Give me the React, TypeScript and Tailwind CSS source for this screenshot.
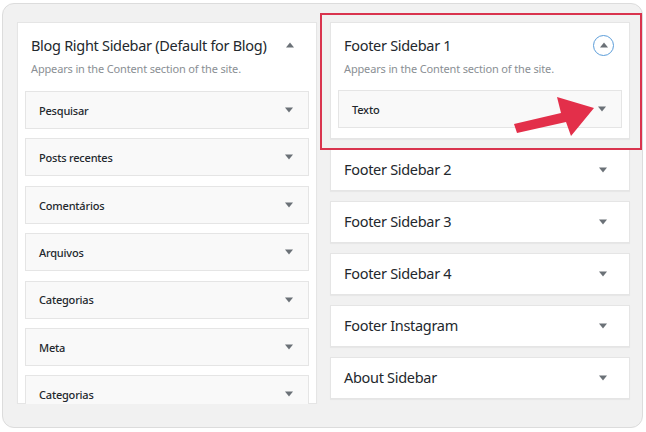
import React from "react";

const leftWidgets = ["Pesquisar", "Posts recentes", "Comentários", "Arquivos", "Categorias", "Meta", "Categorias"];
const rightAreas = ["Footer Sidebar 2", "Footer Sidebar 3", "Footer Sidebar 4", "Footer Instagram", "About Sidebar"];

function Caret({ up = false }: { up?: boolean }) {
  return (
    <svg width="8" height="6" viewBox="0 0 8 6" className="shrink-0">
      {up ? <polygon points="0,5.5 8,5.5 4,0.5" fill="#6b7177" /> : <polygon points="0,0.5 8,0.5 4,5.5" fill="#6b7177" />}
    </svg>
  );
}

function WidgetRow({ label }: { label: string }) {
  return (
    <div className="flex h-[38px] shrink-0 items-center justify-between border border-[#e5e5e5] bg-[#f9f9f9] pl-[13px] pr-[15px]">
      <span className="pt-[2px] text-[11px] font-medium tracking-[-0.2px] text-[#23282d]">{label}</span>
      <Caret />
    </div>
  );
}

export default function App() {
  return (
    <div className="h-[432px] w-[646px] bg-white pl-[2px] pr-[3px] pt-[3px]" style={{ fontFamily: '"Noto Sans", "Open Sans", sans-serif' }}>
      <div className="relative h-[425px] rounded-[12px] border border-[#dcdcdc] bg-[#f1f1f1]">
        <div className="flex h-[400px] gap-[13px] overflow-hidden pl-[14px] pt-[18px]">
          {/* left sidebar, open */}
          <div className="w-[300px] shrink-0 border border-[#e5e5e5] bg-white shadow-[0_1px_1px_rgba(0,0,0,0.04)]">
            <div className="flex items-center justify-between pl-[13px] pr-[22px] pt-[12px]">
              <h3 className="whitespace-nowrap text-[14.5px] leading-[20px] tracking-[-0.3px] text-[#23282d]">Blog Right Sidebar (Default for Blog)</h3>
              <Caret up />
            </div>
            <p className="pl-[13px] pt-[6px] text-[11px] leading-[16px] tracking-[-0.15px] text-[#8a8f94]">Appears in the Content section of the site.</p>
            <div className="flex flex-col gap-[9.4px] px-[7px] pt-[14px]">
              {leftWidgets.map((w, i) => (
                <WidgetRow key={i} label={w} />
              ))}
            </div>
          </div>

          {/* right column */}
          <div className="flex w-[300px] shrink-0 flex-col gap-[10px]">
            <div className="border border-[#e5e5e5] bg-white pb-[10px] shadow-[0_1px_1px_rgba(0,0,0,0.04)]">
              <div className="flex items-center justify-between pl-[13px] pr-[15px] pt-[12px]">
                <h3 className="whitespace-nowrap text-[14.5px] leading-[20px] tracking-[-0.3px] text-[#23282d]">Footer Sidebar 1</h3>
                <div className="-my-[1px] flex h-[21px] w-[21px] items-center justify-center rounded-full border border-[#5b9dd9]">
                  <Caret up />
                </div>
              </div>
              <p className="pl-[13px] pt-[6px] text-[11px] leading-[16px] tracking-[-0.15px] text-[#8a8f94]">Appears in the Content section of the site.</p>
              <div className="px-[7px] pt-[13px]">
                <WidgetRow label="Texto" />
              </div>
            </div>
            {rightAreas.map((a) => (
              <div key={a} className="flex h-[42px] shrink-0 items-center justify-between border border-[#e5e5e5] bg-white pl-[13px] pr-[22px] shadow-[0_1px_1px_rgba(0,0,0,0.04)]">
                <span className="whitespace-nowrap text-[14.5px] tracking-[-0.3px] text-[#23282d]">{a}</span>
                <Caret />
              </div>
            ))}
          </div>
        </div>

        {/* highlight box */}
        <div className="absolute left-[317px] top-[9px] h-[137px] w-[322px] border-2 border-[#d9344e]" />
        {/* arrow */}
        <svg className="absolute" width="646" height="432" viewBox="0 0 646 432" style={{ left: -3, top: -4 }}>
          <polygon points="514,124 561,113 557,97 594,108 571,136 566,122 517,133" fill="#e32f4a" />
        </svg>
      </div>
    </div>
  );
}
